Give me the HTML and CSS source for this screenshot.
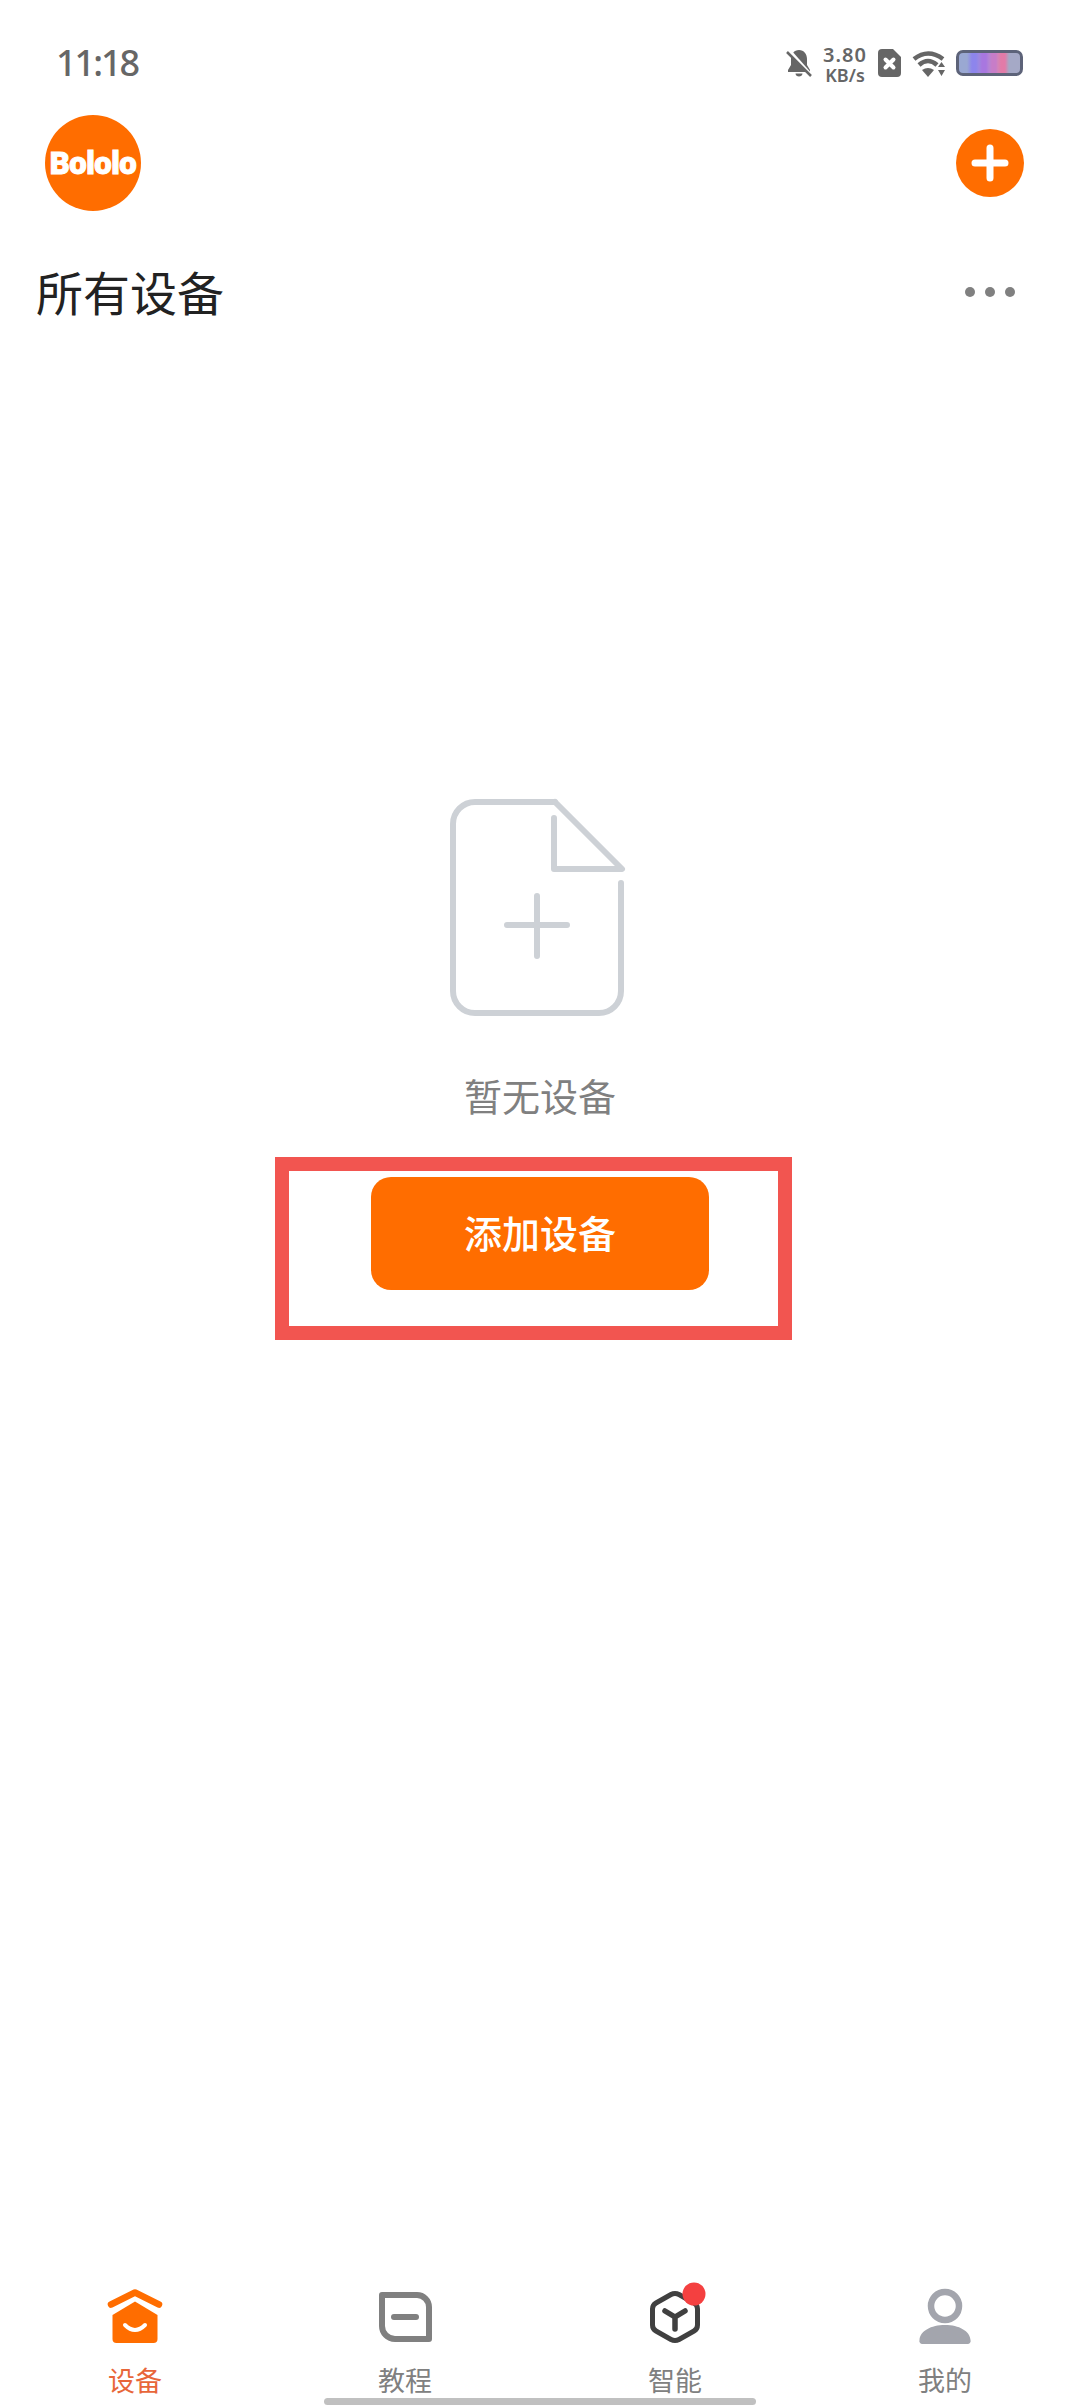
FILE: index.html
```html
<!DOCTYPE html>
<html lang="zh-CN">
<head>
<meta charset="utf-8">
<title>所有设备</title>
<link rel="stylesheet" href="styles.css">
</head>
<body>
<div class="app">
  <div class="status">
    <span class="time">11:18</span>
    <div class="status-icons">
      <svg class="ic-bell" viewBox="0 0 26 28"><path class="fill-g" d="M13 1c-5 0-8 4-8 9v6l-3 5v2h22v-2l-3-5v-6c0-5-3-9-8-9zM9.500 24.500h7c0 4-7 4-7 0z"/><path class="slash-w" d="M3 1l22 25"/><path class="slash-g" d="M1 3l24 24"/></svg>
      <div class="speed"><span class="speed-num">3.80</span><span class="speed-unit">KB/s</span></div>
      <svg class="ic-sim" viewBox="0 0 23 28"><path class="fill-g" d="M4 0h11l8 8v16a4 4 0 0 1-4 4H4a4 4 0 0 1-4-4V4a4 4 0 0 1 4-4z"/><path class="x-w" d="M7.500 10.500l8 8M15.500 10.500l-8 8"/></svg>
      <svg class="ic-wifi" viewBox="0 0 34 27"><path class="arc" d="M2 9Q16-2 31 9"/><path class="arc" d="M7 15Q16 7 25 15"/><path class="fill-g" d="M10 20Q16 16 22 20L16 27z"/><path class="fill-g" d="M26 17h7l-3.500-5zM26 20h7l-3.500 6z"/></svg>
      <div class="battery"></div>
    </div>
  </div>

  <div class="header">
    <div class="logo"><span class="logo-text">Bololo</span></div>
    <div class="add">
      <svg class="add-plus" viewBox="0 0 68 68"><path d="M19 34h30M34 19v30"/></svg>
    </div>
  </div>

  <div class="title-row">
    <h1 class="title">所有设备</h1>
    <div class="dots"><i class="dot"></i><i class="dot"></i><i class="dot"></i></div>
  </div>

  <main class="empty">
    <svg class="doc" viewBox="2 0 180 224">
      <path d="M107 6H27a22 22 0 0 0-22 22V195a22 22 0 0 0 22 22H151a22 22 0 0 0 22-22V87"/>
      <path d="M107 6L174 73H106V22"/>
      <path d="M59 129H119M89 100V160"/>
    </svg>
    <p class="empty-text">暂无设备</p>
    <div class="highlight">
      <button class="add-btn">添加设备</button>
    </div>
  </main>

  <nav class="tabs">
    <div class="tab tab-active">
      <svg class="tab-icon" viewBox="0 0 64 64">
        <path class="home-roof" d="M8 19.500L32 7.500L56 19.500"/>
        <path class="home-body" d="M32 16.500L54.500 30V54a4 4 0 0 1-4 4H13.500a4 4 0 0 1-4-4V30z"/>
        <path class="home-smile" d="M22 40Q32 50 42 40"/>
      </svg>
      <span class="tab-label">设备</span>
    </div>
    <div class="tab">
      <svg class="tab-icon" viewBox="0 0 64 64">
        <path class="guide" d="M9 10H44a12 12 0 0 1 12 12V54H22a13 13 0 0 1-13-13z"/>
        <path class="guide guide-minus" d="M21 32H43"/>
      </svg>
      <span class="tab-label">教程</span>
    </div>
    <div class="tab">
      <svg class="tab-icon" viewBox="0 0 64 64">
        <path class="cube" d="M28 9.500Q32 7.300 36 9.500L51 18Q54.500 20 54.500 24V40Q54.500 44 51 46L36 54.500Q32 56.700 28 54.500L13 46Q9.500 44 9.500 40V24Q9.500 20 13 18z"/>
        <path class="cube cube-y" d="M22 26L32 32L42 26M32 32V44"/>
        <circle class="badge" cx="51" cy="9" r="11.500"/>
      </svg>
      <span class="tab-label">智能</span>
    </div>
    <div class="tab">
      <svg class="tab-icon" viewBox="0 0 64 64">
        <circle class="head" cx="32" cy="21" r="14"/>
        <path class="shoulders" d="M6.500 55C7 46 18 40 32 40S57 46 57.500 55a3 3 0 0 1-3 4H9.500a3 3 0 0 1-3-4z"/>
      </svg>
      <span class="tab-label">我的</span>
    </div>
  </nav>

  <div class="home-bar"></div>
</div>
</body>
</html>
```

FILE: styles.css
```css
* { box-sizing: border-box; }
html, body { margin: 0; padding: 0; background: #fff; }
body { font-family: "Noto Sans CJK SC", "Noto Sans", sans-serif; }

.app {
  position: relative;
  width: 1080px;
  height: 2408px;
  display: flex;
  flex-direction: column;
  background: #fff;
  overflow: hidden;
}

/* status bar */
.status {
  display: flex;
  justify-content: space-between;
  align-items: center;
  height: 46px;
  margin-top: 40px;
  padding: 0 57px 0 56px;
}
.time {
  font-family: "Noto Sans", sans-serif;
  font-size: 36px;
  font-weight: 500;
  letter-spacing: -2px;
  line-height: 46px;
  color: #666;
}
.status-icons { display: flex; align-items: center; gap: 10.500px; }
.ic-bell { width: 26px; height: 28px; }
.ic-sim { width: 23px; height: 28px; }
.ic-wifi { width: 34px; height: 27px; }
.fill-g { fill: #666; }
.slash-w { stroke: #fff; stroke-width: 3; fill: none; }
.slash-g { stroke: #666; stroke-width: 2.500; fill: none; }
.x-w { stroke: #fff; stroke-width: 4; stroke-linecap: round; fill: none; }
.arc { stroke: #666; stroke-width: 4.500; fill: none; }
.speed {
  width: 45px;
  margin-top: 4px;
  display: flex;
  flex-direction: column;
  align-items: center;
  font-family: "Noto Sans", sans-serif;
  font-weight: 600;
  color: #666;
}
.speed-num { font-size: 20px; line-height: 20px; letter-spacing: 1px; }
.speed-unit { font-size: 18px; line-height: 20px; }
.battery {
  width: 67px;
  height: 26px;
  border: 3px solid #5d6379;
  border-radius: 7px;
  background: linear-gradient(90deg,
    #9aa8d2 0, #9aa8d2 8px,
    #8d85ec 13px, #8d85ec 17px, #9d88e0 20px,
    #a877e0 23px, #a877e0 27px, #b585d4 30px,
    #c77dc8 33px, #c77dc8 37px, #d385b8 39px,
    #e27ba8 42px, #e27ba8 46px, #a5a9c6 50px, #a5a9c6 100%);
}

/* header */
.header {
  display: flex;
  justify-content: space-between;
  align-items: center;
  margin-top: 29px;
  padding: 0 56px 0 45px;
}
.logo {
  width: 96px;
  height: 96px;
  border-radius: 50%;
  background: #ff6d00;
  display: flex;
  align-items: center;
  justify-content: center;
}
.logo-text {
  font-family: "Roboto", sans-serif;
  font-size: 31px;
  font-weight: 900;
  letter-spacing: -0.500px;
  line-height: 1;
  color: #fff;
  -webkit-text-stroke: 1px #fff;
}
.add {
  width: 68px;
  height: 68px;
  border-radius: 50%;
  background: #ff6d00;
}
.add-plus { display: block; width: 68px; height: 68px; }
.add-plus path { stroke: #fff; stroke-width: 7; stroke-linecap: round; fill: none; }

/* title */
.title-row {
  display: flex;
  justify-content: space-between;
  align-items: center;
  height: 60px;
  margin-top: 50px;
  padding: 0 65px 0 36px;
}
.title {
  margin: 0;
  font-size: 47px;
  font-weight: 400;
  line-height: 60px;
  color: #222;
}
.dots { display: flex; gap: 10px; margin-top: 2px; }
.dot { display: block; width: 10px; height: 10px; border-radius: 50%; background: #808080; }

/* empty state */
.empty {
  display: flex;
  flex-direction: column;
  align-items: center;
  padding-top: 475px;
}
.doc { display: block; width: 180px; height: 224px; }
.doc path {
  fill: none;
  stroke: #cdd1d6;
  stroke-width: 6;
  stroke-linecap: round;
  stroke-linejoin: round;
}
.empty-text {
  margin: 50px 0 0;
  font-size: 38px;
  line-height: 50px;
  color: #808080;
}
.highlight {
  width: 517px;
  height: 183px;
  margin: 37px 0 0 -13px;
  padding: 6px 0 0 82px;
  border: 14px solid #f25550;
  display: flex;
  align-items: flex-start;
}
.add-btn {
  width: 338px;
  height: 113px;
  flex: none;
  border: 0;
  padding: 0 0 4px;
  border-radius: 20px;
  background: #ff6d00;
  color: #fff;
  font-family: inherit;
  font-size: 38px;
  font-weight: 500;
}

/* tabs */
.tabs {
  display: grid;
  grid-template-columns: repeat(4, 1fr);
  margin-top: auto;
  padding-bottom: 9px;
}
.tab {
  display: flex;
  flex-direction: column;
  align-items: center;
  gap: 15px;
}
.tab-icon { display: block; width: 64px; height: 64px; overflow: visible; position: relative; top: 1px; }
.tab-label { font-size: 27px; line-height: 36px; color: #808080; position: relative; top: -1px; }
.tab-active .tab-label { color: #e8663a; }
.home-roof { fill: none; stroke: #ff6d00; stroke-width: 6.500; stroke-linecap: round; stroke-linejoin: round; }
.home-body { fill: #ff6d00; }
.home-smile { fill: none; stroke: #fff; stroke-width: 4; stroke-linecap: round; }
.guide { fill: none; stroke: #808080; stroke-width: 6; stroke-linejoin: round; }
.guide-minus { stroke-linecap: round; }
.cube { fill: none; stroke: #404040; stroke-width: 5; stroke-linejoin: round; }
.cube-y { stroke-linecap: round; stroke-width: 5.500; }
.badge { fill: #f44040; }
.head { fill: none; stroke: #a3a5ad; stroke-width: 6.500; }
.shoulders { fill: #a3a5ad; }

.home-bar {
  position: absolute;
  left: 324px;
  bottom: 3px;
  width: 432px;
  height: 7px;
  border-radius: 4px;
  background: #c0c0c0;
}
```
